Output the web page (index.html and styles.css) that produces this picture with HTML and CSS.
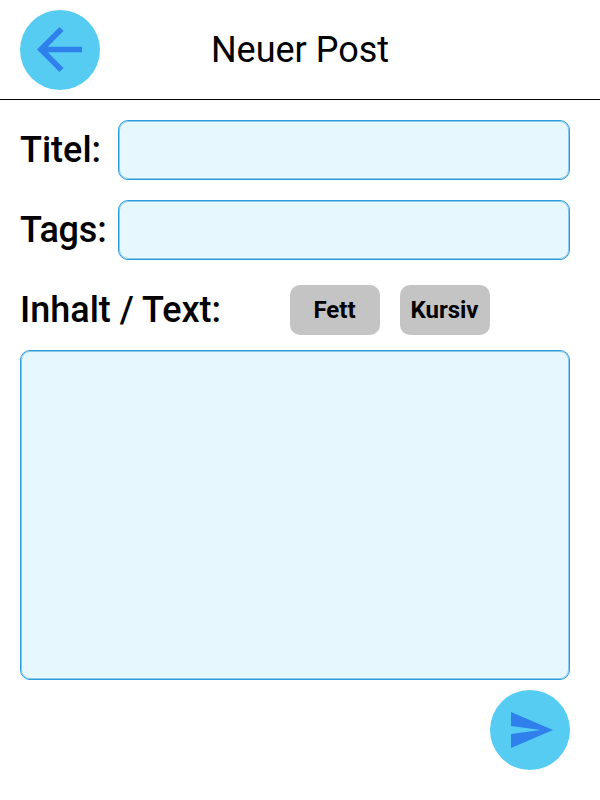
FILE: index.html
```html
<!DOCTYPE html>
<html lang="de">
<head>
<meta charset="utf-8">
<title>Neuer Post</title>
<link rel="stylesheet" href="styles.css">
</head>
<body>
<header class="header">
  <button class="round" type="button"><svg class="back" width="45" height="45" viewBox="0 0 45 45"><path d="M45 19.7H10.8L26.5 4 22.5 0 0 22.5 22.5 45l4-4L10.8 25.3H45z"/></svg></button>
  <h1 class="title">Neuer Post</h1>
</header>
<main class="form">
  <div class="row"><label class="label" for="titel">Titel:</label><input class="field" id="titel"></div>
  <div class="row"><label class="label tags" for="tags">Tags:</label><input class="field" id="tags"></div>
  <div class="row tools"><label class="label wide" for="text">Inhalt / Text:</label><button class="format" type="button">Fett</button><button class="format" type="button">Kursiv</button></div>
  <textarea class="field text" id="text"></textarea>
  <div class="actions"><button class="round" type="button"><svg class="send" width="42" height="36" viewBox="0 0 42 36"><path d="M0 36 42 18 0 0v14l30 4-30 4z"/></svg></button></div>
</main>
</body>
</html>
```
FILE: styles.css
```css
* { box-sizing: border-box; }
body { margin: 0; background: #fff; color: #000; font-family: Roboto, sans-serif; }
.header { height: 100px; display: grid; grid-template-columns: 80px 1fr 80px; align-items: center; padding: 0 20px; border-bottom: 1px solid #000; }
.title { margin: 0; font-size: 36px; line-height: 42px; font-weight: 400; text-align: center; }
.round { width: 80px; height: 80px; padding: 0; border: 0; border-radius: 50%; background: #56ccf2; display: flex; align-items: center; justify-content: center; }
.round svg { fill: #2f80ed; }
.back { margin: 0 1px 1px 0; }
.send { margin-left: 4px; }
.form { padding: 20px 30px 0 20px; }
.row { display: flex; align-items: center; height: 60px; margin-bottom: 20px; }
.label { width: 98px; flex: none; font-size: 36px; line-height: 42px; font-weight: 500; white-space: nowrap; }
.tags { letter-spacing: -0.2px; }
.wide { width: 270px; }
.field { display: block; flex: 1; min-width: 0; height: 60px; padding: 10px; border: 1px solid #2d9cdb; border-radius: 10px; background: #e6f7fe; box-shadow: inset 0 0 0 1px #89c9ec; font: 24px Roboto, sans-serif; outline: none; }
.tools { margin-bottom: 10px; }
.format { width: 90px; height: 50px; margin-right: 20px; padding: 0 1px 0 0; border: 0; border-radius: 10px; background: #c4c4c4; color: #000; font: 700 24px/28px Roboto, sans-serif; }
.text { width: 100%; height: 330px; resize: none; }
.actions { display: flex; justify-content: flex-end; padding-top: 10px; }
```
